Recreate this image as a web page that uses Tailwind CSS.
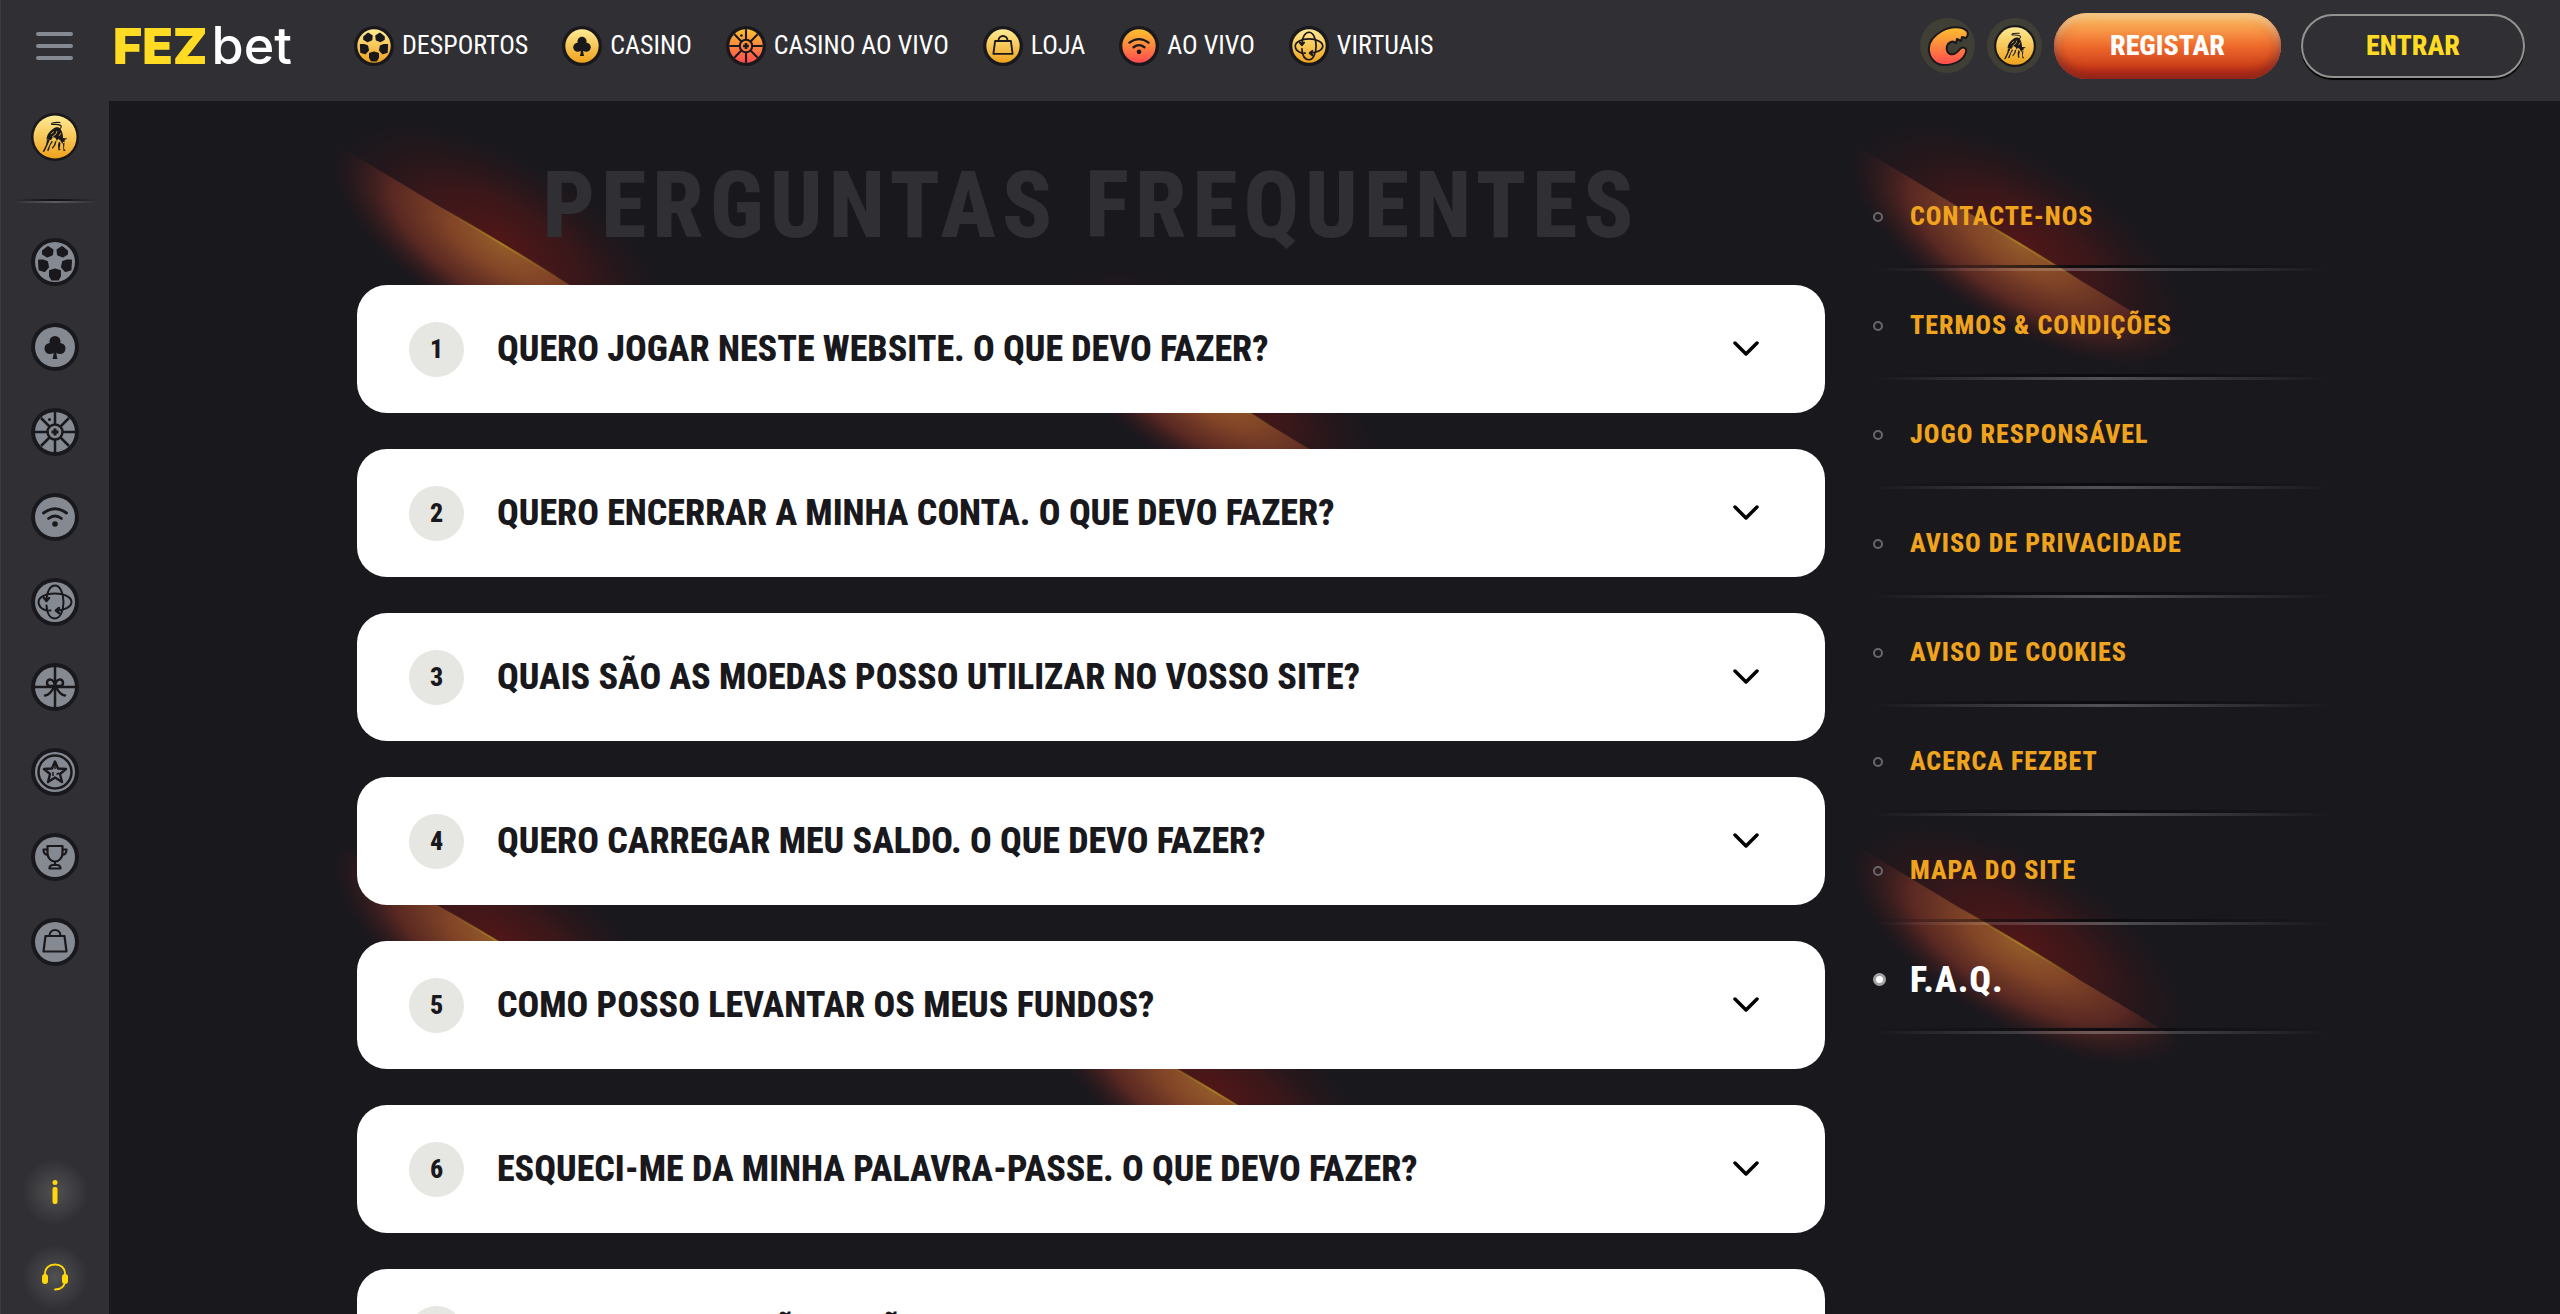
<!DOCTYPE html>
<html lang="pt">
<head>
  <meta charset="UTF-8" />
  <meta name="viewport" content="width=device-width, initial-scale=1.0" />
  <title>FEZbet - Perguntas Frequentes</title>
  <script src="https://cdn.jsdelivr.net/npm/@tailwindcss/browser@4"></script>
  <style>
    body {
      font-family: 'Roboto Condensed', 'Liberation Sans Narrow', 'Roboto', sans-serif;
    }
  </style>
</head>
<body class="bg-[#19181d] text-white">

  <!-- icon sprite -->
  <svg class="absolute w-0 h-0" aria-hidden="true">
    <defs>
      <linearGradient id="gold" x1="0" y1="0" x2="0" y2="1">
        <stop offset="0" stop-color="#ffeb94" />
        <stop offset="1" stop-color="#efa21b" />
      </linearGradient>
      <linearGradient id="fire" x1="0" y1="0" x2="0" y2="1">
        <stop offset="0" stop-color="#fdc12e" />
        <stop offset="1" stop-color="#ff4a4f" />
      </linearGradient>
      <radialGradient id="flame-top" gradientUnits="userSpaceOnUse" cx="0" cy="0" r="1" gradientTransform="scale(190 88)">
        <stop offset="0" stop-color="#521617" />
        <stop offset=".45" stop-color="#401719" stop-opacity=".85" />
        <stop offset="1" stop-color="#2c1519" stop-opacity="0" />
      </radialGradient>
      <radialGradient id="flame-bottom" gradientUnits="userSpaceOnUse" cx="0" cy="0" r="1" gradientTransform="scale(192 82)">
        <stop offset="0" stop-color="#935c2a" />
        <stop offset=".3" stop-color="#824527" />
        <stop offset=".65" stop-color="#602a23" stop-opacity=".9" />
        <stop offset="1" stop-color="#3c171b" stop-opacity="0" />
      </radialGradient>
      <linearGradient id="flame-edge">
        <stop offset="0" stop-color="#b0801f" stop-opacity="0" />
        <stop offset=".5" stop-color="#a87c22" />
        <stop offset="1" stop-color="#b0801f" stop-opacity="0" />
      </linearGradient>
    </defs>

    <symbol id="flame" viewBox="-200 -140 400 280">
      <g transform="rotate(31)">
        <path d="M-190 0A190 88 0 0 1 190 0Z" fill="url(#flame-top)" />
        <path d="M-192 0A192 82 0 0 0 192 0Z" fill="url(#flame-bottom)" />
        <rect x="-70" y="-1" width="140" height="2" fill="url(#flame-edge)" />
      </g>
    </symbol>

    <symbol id="ball" viewBox="-24 -24 48 48">
      <circle r="24" fill="#19181d" />
      <circle r="20" />
      <g fill="#19181d" stroke="#19181d" stroke-width="2" stroke-linejoin="round">
        <path d="M-12-11L-7-15L-2.500-12L-3-7.500L-8-5.500L-12-8Z" />
        <path d="M12-11L7-15L2.500-12L3-7.500L8-5.500L12-8Z" />
        <path d="M-16-1.500L-12-1.500L-8 0L-7 5L-10.500 9L-15.500 7.500Z" />
        <path d="M16-1.500L12-1.500L8 0L7 5L10.500 9L15.500 7.500Z" />
        <path d="M-5 9L0 7.500L5 9L5 14L3 17.500L-3 17.500L-5 14Z" />
      </g>
    </symbol>

    <symbol id="club" viewBox="-24 -24 48 48">
      <circle r="24" fill="#19181d" />
      <circle r="20" />
      <g fill="#19181d">
        <circle cy="-5.500" r="5.500" />
        <circle cx="-5" cy="1.500" r="5.500" />
        <circle cx="5" cy="1.500" r="5.500" />
        <path d="M-1.500 0H1.500Q1 8 2.500 12H-2.500Q-1 8-1.500 0Z" />
      </g>
    </symbol>

    <symbol id="roulette" viewBox="-24 -24 48 48">
      <circle r="24" fill="#19181d" />
      <circle r="20" />
      <g stroke="#19181d" stroke-width="2.500" fill="none">
        <path d="M0-20V-8M0 20V8M-20 0H-8M20 0H8M-14-14L-5.500-5.500M14 14L5.500 5.500M14-14L5.500-5.500M-14 14L-5.500 5.500" />
        <circle r="7.500" />
        <path d="M-3.500 0H3.500M0-3.500V3.500" stroke-width="3" />
      </g>
      <circle cx="-5.500" cy="-12.500" r="1.500" fill="#19181d" />
    </symbol>

    <symbol id="wifi" viewBox="-24 -24 48 48">
      <circle r="24" fill="#19181d" />
      <circle r="20" />
      <g fill="none" stroke="#19181d" stroke-width="2.800" stroke-linecap="round">
        <path d="M-11.500-4Q0-12.500 11.500-4" />
        <path d="M-6.500 1.500Q0-3.500 6.500 1.500" />
      </g>
      <circle cy="7" r="2.800" fill="#19181d" />
    </symbol>

    <symbol id="virtual" viewBox="-24 -24 48 48">
      <circle r="24" fill="#19181d" />
      <circle r="20" />
      <g fill="none" stroke="#19181d" stroke-width="2" stroke-linecap="round" stroke-linejoin="round">
        <path d="M-8.500 8.500C-13.500 7-16.500 4-16.500 0C-16.500-5-9-8.500 0-8.500S16.500-5 16.500 0S9 8.500 1 8.500M-4.500 8.500H-6" />
        <path d="M-8.500 3.500C-8 12-4.500 16.500 0 16.500C5 16.500 8.500 9 8.500 0S5-16.500 0-16.500C-4.500-16.500-8-11-8.500-3" />
        <path d="M-11-4L-8.500-1L-6-4M4 6L1 8.500L4 11" stroke-width="2.500" />
      </g>
    </symbol>

    <symbol id="gift" viewBox="-24 -24 48 48">
      <circle r="24" fill="#19181d" />
      <circle r="20" />
      <g fill="none" stroke="#19181d" stroke-width="2.500" stroke-linecap="round" stroke-linejoin="round">
        <path d="M-20 0H20M0-20V20" />
        <path d="M0-1C-1-9-8-9-8-4Q-8-1-5-1ZM0-1C1-9 8-9 8-4Q8-1 5-1Z" />
        <path d="M-1 0Q-5 8-10 8.500M1 0Q5 8 10 8.500" />
      </g>
    </symbol>

    <symbol id="star" viewBox="-24 -24 48 48">
      <circle r="24" fill="#19181d" />
      <circle r="20" />
      <circle r="16.500" fill="none" stroke="#19181d" stroke-width="2.500" />
      <path d="M0-10.500L3-3.500L11-3L5 2L7 10L0 5.500L-7 10L-5 2L-11-3L-3-3.500Z" fill="none" stroke="#19181d" stroke-width="2.400" stroke-linejoin="round" />
      <path d="M0-9V-3M4 1L1.500 2.500M-2 0V4" stroke="#19181d" stroke-width="1.500" />
    </symbol>

    <symbol id="cup" viewBox="-24 -24 48 48">
      <circle r="24" fill="#19181d" />
      <circle r="20" />
      <g fill="none" stroke="#19181d" stroke-width="2.200" stroke-linejoin="round">
        <path d="M-7.500-11H7.500V-4C7.500 1 4 4.500 0 4.500S-7.500 1-7.500-4Z" />
        <path d="M-7.500-7.500H-11.500Q-11.500-2-7-2M7.500-7.500H11.500Q11.500-2 7-2M0 4.500V8" />
        <path d="M-5.500 11.500Q-5.500 8-2 8H2Q5.500 8 5.500 11.500Z" />
      </g>
    </symbol>

    <symbol id="bag" viewBox="-24 -24 48 48">
      <circle r="24" fill="#19181d" />
      <circle r="20" />
      <g fill="none" stroke="#19181d" stroke-width="2.200" stroke-linejoin="round">
        <path d="M-9.500-6H9.500L11.500 9.500H-11.500Z" />
        <path d="M-5.500-6C-5.500-14 5.500-14 5.500-6" />
      </g>
    </symbol>

    <symbol id="bull" viewBox="-24 -24 48 48">
      <circle r="24" fill="#19181d" />
      <circle r="21.500" />
      <g fill="#19181d">
        <path d="M-2-8C0-10 4-10.500 5.500-8C7.500-5 8-2 8 1L12.500 1.500L9.500 3L10 4.500L8 5L7.500 7L5 3L3 2L2 4L.5 1L-2 0L-4 3L-8.500 2.500C-8-3-5-6-2-8Z" />
        <path d="M-8 3L-5 2.500L-7 7L-10.500 14.500L-12.500 15L-9 8Z" />
        <path d="M-3.500 4L-2 4.500L-4.500 8L-6.500 14L-8 13.500L-5.500 8Z" />
        <path d="M0 4.500L1.500 4L.5 8L-2.500 12L-3 10.500L-1 8Z" />
        <path d="M4 4.500L5.500 6L4.500 12L6 12.500L3.500 13.500L3 8Z" />
        <path d="M8 6.500L9.500 5.500L9 11.500L10.500 14H8.500Z" />
      </g>
      <path d="M5-8.500C8-11 6-13-3-12.500C-5-14 0-15 5-14.500" fill="none" stroke="#19181d" stroke-width="1.200" stroke-linecap="round" />
      <path d="M-4-3L-1-5.500M-3 0L1-3L2-6M4-1L6-4" fill="none" stroke="#f3bd45" stroke-width=".8" />
    </symbol>

    <symbol id="claw" viewBox="-21 -21 42 42">
      <path d="M19-15C14-20 2-20-6-15C-15-10-20-3-19 5C-18 13-12 19-4 19C7 19 16 14 18 6C19 2 15 0 12 3C9 7 5 9 2 8C-2 6-2 1 0-2C2-4 4-5 6-4L8-3L9-7L13-5L14-9L18-8C20-10 20-13 19-15Z" fill="url(#fire)" stroke="#19181d" stroke-width="2" stroke-linejoin="round" />
    </symbol>

    <symbol id="chevron" viewBox="0 0 26 16">
      <path d="M2 2L13 13L24 2" fill="none" stroke="#000" stroke-width="3.500" stroke-linecap="round" stroke-linejoin="round" />
    </symbol>
  </svg>

  <div class="h-screen overflow-hidden flex flex-col border-l border-[#3d3c42]">

    <!-- top bar -->
    <header class="h-[101px] shrink-0 bg-[#302f34] pb-[10px] pl-[35px] pr-[35px] flex items-center">
      <button type="button" aria-label="Menu" class="w-[37px] flex flex-col gap-2">
        <span class="h-1 rounded-full bg-[#858991]"></span>
        <span class="h-1 rounded-full bg-[#858991]"></span>
        <span class="h-1 rounded-full bg-[#858991]"></span>
      </button>
      <a href="#" class="ml-10 w-[200px] flex items-baseline gap-1 leading-none font-[Inter] font-medium"><span class="text-[50px] font-black text-[#ffdc23]">FEZ</span><span class="text-[52px]">bet</span></a>
      <nav class="ml-[41px] flex items-center gap-[34px] text-[26px] whitespace-nowrap">
        <a href="#" class="flex items-center gap-2"><svg class="w-10 h-10" fill="url(#gold)"><use href="#ball" /></svg>DESPORTOS</a>
        <a href="#" class="flex items-center gap-2"><svg class="w-10 h-10" fill="url(#gold)"><use href="#club" /></svg>CASINO</a>
        <a href="#" class="flex items-center gap-2"><svg class="w-10 h-10" fill="url(#fire)"><use href="#roulette" /></svg>CASINO AO VIVO</a>
        <a href="#" class="flex items-center gap-2"><svg class="w-10 h-10" fill="url(#gold)"><use href="#bag" /></svg>LOJA</a>
        <a href="#" class="flex items-center gap-2"><svg class="w-10 h-10" fill="url(#fire)"><use href="#wifi" /></svg>AO VIVO</a>
        <a href="#" class="flex items-center gap-2"><svg class="w-10 h-10" fill="url(#gold)"><use href="#virtual" /></svg>VIRTUAIS</a>
      </nav>
      <div class="ml-auto flex items-center gap-3 text-[28px] font-extrabold">
        <button type="button" aria-label="Bónus" class="w-[55px] h-[55px] rounded-full bg-[#403f35] flex items-center justify-center">
          <svg class="w-[42px] h-[42px]"><use href="#claw" /></svg>
        </button>
        <button type="button" aria-label="Touro" class="w-[55px] h-[55px] rounded-full bg-[#403f35] flex items-center justify-center">
          <svg class="w-[42px] h-[42px]" fill="url(#gold)"><use href="#bull" /></svg>
        </button>
        <button type="button" class="w-[227px] h-[66px] rounded-full bg-linear-to-b from-[#ffc766] via-[#ee6a2b] via-50% to-[#b81f12] shadow-[inset_0_-6px_8px_#8e2017,inset_0_4px_8px_#ffdf9e,inset_-6px_0_12px_#b8502f80,inset_6px_0_12px_#b8502f80]">REGISTAR</button>
        <button type="button" class="ml-2 w-[224px] h-16 rounded-full border-2 border-[#94928f] shadow-[0_2px_1px_#000] text-[#ffdc23]">ENTRAR</button>
      </div>
    </header>

    <div class="flex-1 min-h-0 flex">

      <!-- side rail -->
      <aside class="w-[108px] shrink-0 bg-[#302f34] pt-3 pb-3 flex flex-col items-center" aria-label="Atalhos">
        <a href="#" aria-label="Touro"><svg class="w-12 h-12" fill="url(#gold)"><use href="#bull" /></svg></a>
        <div class="mt-[38px] w-[84px]">
          <div class="h-[2px] bg-linear-to-r from-transparent via-[#111014] to-transparent"></div>
          <div class="h-[2px] bg-linear-to-r from-transparent via-[#5c5b60] to-transparent"></div>
        </div>
        <nav class="mt-[35px] flex flex-col gap-[37px] fill-[#858991]">
          <a href="#" aria-label="Desportos"><svg class="w-12 h-12"><use href="#ball" /></svg></a>
          <a href="#" aria-label="Casino"><svg class="w-12 h-12"><use href="#club" /></svg></a>
          <a href="#" aria-label="Casino ao vivo"><svg class="w-12 h-12"><use href="#roulette" /></svg></a>
          <a href="#" aria-label="Ao vivo"><svg class="w-12 h-12"><use href="#wifi" /></svg></a>
          <a href="#" aria-label="Virtuais"><svg class="w-12 h-12"><use href="#virtual" /></svg></a>
          <a href="#" aria-label="Promoções"><svg class="w-12 h-12"><use href="#gift" /></svg></a>
          <a href="#" aria-label="VIP"><svg class="w-12 h-12"><use href="#star" /></svg></a>
          <a href="#" aria-label="Torneios"><svg class="w-12 h-12"><use href="#cup" /></svg></a>
          <a href="#" aria-label="Loja"><svg class="w-12 h-12"><use href="#bag" /></svg></a>
        </nav>
        <div class="mt-auto flex flex-col gap-[19px] -mb-2">
          <a href="#" aria-label="Informação" class="w-[66px] h-[66px] rounded-full bg-[radial-gradient(closest-side,#515052,#302f34)] flex items-center justify-center">
            <svg class="w-6 h-6" viewBox="0 0 24 24" fill="#ffd70a"><circle cx="12" cy="2.500" r="2.500" /><rect x="9.500" y="7" width="5" height="17" rx="2" /></svg>
          </a>
          <a href="#" aria-label="Apoio ao cliente" class="w-[66px] h-[66px] rounded-full bg-[radial-gradient(closest-side,#515052,#302f34)] flex items-center justify-center">
            <svg class="w-7 h-7" viewBox="0 0 28 28" fill="none" stroke="#ffd70a" stroke-width="1.800" stroke-linecap="round">
              <path d="M4 14V11C4 5 8 1.500 14 1.500S24 5 24 11V14M24 19C23 24 19 26.500 14 26.500" />
              <path d="M4 14V18M24 14V18" stroke-width="6" />
            </svg>
          </a>
        </div>
      </aside>

      <main class="flex-1 min-w-0 overflow-hidden pl-[248px] pr-[232px] flex gap-12">

        <!-- questions -->
        <section class="relative flex-1 min-w-0">
          <svg class="absolute -left-[55px] top-[3px] w-[400px] h-[280px]"><use href="#flame" /></svg>
          <svg class="absolute left-[656px] top-[150px] w-[400px] h-[280px]"><use href="#flame" /></svg>
          <svg class="absolute -left-[55px] top-[703px] w-[400px] h-[280px]"><use href="#flame" /></svg>
          <svg class="absolute left-[656px] top-[850px] w-[400px] h-[280px]"><use href="#flame" /></svg>

          <h1 class="relative h-[184px] pt-[50px] text-center text-[92px] leading-[110px] font-extrabold tracking-[6px] text-[#302f34] whitespace-nowrap">PERGUNTAS FREQUENTES</h1>

          <div class="relative flex flex-col gap-9 text-[#19181d] text-[36px] font-extrabold">
            <button type="button" class="h-32 shrink-0 rounded-[30px] bg-white pl-[52px] pr-[66px] flex items-center text-left">
              <span class="w-[55px] h-[55px] mr-[33px] rounded-full bg-[#e6e7e2] flex items-center justify-center text-[26px]">1</span>
              QUERO JOGAR NESTE WEBSITE. O QUE DEVO FAZER?
              <svg class="ml-auto w-[26px] h-4"><use href="#chevron" /></svg>
            </button>
            <button type="button" class="h-32 shrink-0 rounded-[30px] bg-white pl-[52px] pr-[66px] flex items-center text-left">
              <span class="w-[55px] h-[55px] mr-[33px] rounded-full bg-[#e6e7e2] flex items-center justify-center text-[26px]">2</span>
              QUERO ENCERRAR A MINHA CONTA. O QUE DEVO FAZER?
              <svg class="ml-auto w-[26px] h-4"><use href="#chevron" /></svg>
            </button>
            <button type="button" class="h-32 shrink-0 rounded-[30px] bg-white pl-[52px] pr-[66px] flex items-center text-left">
              <span class="w-[55px] h-[55px] mr-[33px] rounded-full bg-[#e6e7e2] flex items-center justify-center text-[26px]">3</span>
              QUAIS SÃO AS MOEDAS POSSO UTILIZAR NO VOSSO SITE?
              <svg class="ml-auto w-[26px] h-4"><use href="#chevron" /></svg>
            </button>
            <button type="button" class="h-32 shrink-0 rounded-[30px] bg-white pl-[52px] pr-[66px] flex items-center text-left">
              <span class="w-[55px] h-[55px] mr-[33px] rounded-full bg-[#e6e7e2] flex items-center justify-center text-[26px]">4</span>
              QUERO CARREGAR MEU SALDO. O QUE DEVO FAZER?
              <svg class="ml-auto w-[26px] h-4"><use href="#chevron" /></svg>
            </button>
            <button type="button" class="h-32 shrink-0 rounded-[30px] bg-white pl-[52px] pr-[66px] flex items-center text-left">
              <span class="w-[55px] h-[55px] mr-[33px] rounded-full bg-[#e6e7e2] flex items-center justify-center text-[26px]">5</span>
              COMO POSSO LEVANTAR OS MEUS FUNDOS?
              <svg class="ml-auto w-[26px] h-4"><use href="#chevron" /></svg>
            </button>
            <button type="button" class="h-32 shrink-0 rounded-[30px] bg-white pl-[52px] pr-[66px] flex items-center text-left">
              <span class="w-[55px] h-[55px] mr-[33px] rounded-full bg-[#e6e7e2] flex items-center justify-center text-[26px]">6</span>
              ESQUECI-ME DA MINHA PALAVRA-PASSE. O QUE DEVO FAZER?
              <svg class="ml-auto w-[26px] h-4"><use href="#chevron" /></svg>
            </button>
            <button type="button" class="h-32 shrink-0 rounded-[30px] bg-white pl-[52px] pr-[66px] flex items-center text-left">
              <span class="w-[55px] h-[55px] mr-[33px] rounded-full bg-[#e6e7e2] flex items-center justify-center text-[26px]">7</span>
              OS MEUS DADOS NÃO ESTÃO CORRETOS. O QUE DEVO FAZER?
              <svg class="ml-auto w-[26px] h-4"><use href="#chevron" /></svg>
            </button>
          </div>
        </section>

        <!-- info pages -->
        <nav class="relative w-[455px] shrink-0 pt-[61px] text-[26px] font-extrabold tracking-[1px] text-[#f0a31c]">
          <svg class="absolute -left-[53px] top-[3px] w-[400px] h-[280px]"><use href="#flame" /></svg>
          <svg class="absolute -left-[53px] top-[703px] w-[400px] h-[280px]"><use href="#flame" /></svg>
          <ul class="relative">
            <li class="h-[109px] flex flex-col">
              <a href="#" class="flex-1 pt-1.5 flex items-center"><span class="w-[10px] h-[10px] mr-[27px] rounded-full border-2 border-[#68676b]"></span>CONTACTE-NOS</a>
              <span class="h-[3px] bg-linear-to-r from-transparent via-[#0c0b0e] to-transparent"></span>
              <span class="h-[3px] bg-linear-to-r from-transparent via-white/25 to-transparent"></span>
            </li>
            <li class="h-[109px] flex flex-col">
              <a href="#" class="flex-1 pt-1.5 flex items-center"><span class="w-[10px] h-[10px] mr-[27px] rounded-full border-2 border-[#68676b]"></span>TERMOS &amp; CONDIÇÕES</a>
              <span class="h-[3px] bg-linear-to-r from-transparent via-[#0c0b0e] to-transparent"></span>
              <span class="h-[3px] bg-linear-to-r from-transparent via-white/25 to-transparent"></span>
            </li>
            <li class="h-[109px] flex flex-col">
              <a href="#" class="flex-1 pt-1.5 flex items-center"><span class="w-[10px] h-[10px] mr-[27px] rounded-full border-2 border-[#68676b]"></span>JOGO RESPONSÁVEL</a>
              <span class="h-[3px] bg-linear-to-r from-transparent via-[#0c0b0e] to-transparent"></span>
              <span class="h-[3px] bg-linear-to-r from-transparent via-white/25 to-transparent"></span>
            </li>
            <li class="h-[109px] flex flex-col">
              <a href="#" class="flex-1 pt-1.5 flex items-center"><span class="w-[10px] h-[10px] mr-[27px] rounded-full border-2 border-[#68676b]"></span>AVISO DE PRIVACIDADE</a>
              <span class="h-[3px] bg-linear-to-r from-transparent via-[#0c0b0e] to-transparent"></span>
              <span class="h-[3px] bg-linear-to-r from-transparent via-white/25 to-transparent"></span>
            </li>
            <li class="h-[109px] flex flex-col">
              <a href="#" class="flex-1 pt-1.5 flex items-center"><span class="w-[10px] h-[10px] mr-[27px] rounded-full border-2 border-[#68676b]"></span>AVISO DE COOKIES</a>
              <span class="h-[3px] bg-linear-to-r from-transparent via-[#0c0b0e] to-transparent"></span>
              <span class="h-[3px] bg-linear-to-r from-transparent via-white/25 to-transparent"></span>
            </li>
            <li class="h-[109px] flex flex-col">
              <a href="#" class="flex-1 pt-1.5 flex items-center"><span class="w-[10px] h-[10px] mr-[27px] rounded-full border-2 border-[#68676b]"></span>ACERCA FEZBET</a>
              <span class="h-[3px] bg-linear-to-r from-transparent via-[#0c0b0e] to-transparent"></span>
              <span class="h-[3px] bg-linear-to-r from-transparent via-white/25 to-transparent"></span>
            </li>
            <li class="h-[109px] flex flex-col">
              <a href="#" class="flex-1 pt-1.5 flex items-center"><span class="w-[10px] h-[10px] mr-[27px] rounded-full border-2 border-[#68676b]"></span>MAPA DO SITE</a>
              <span class="h-[3px] bg-linear-to-r from-transparent via-[#0c0b0e] to-transparent"></span>
              <span class="h-[3px] bg-linear-to-r from-transparent via-white/25 to-transparent"></span>
            </li>
            <li class="h-[109px] flex flex-col">
              <a href="#" aria-current="page" class="flex-1 pt-1.5 flex items-center text-white text-[36px]"><span class="w-[13px] h-[13px] mr-6 rounded-full border-[3px] border-[#a3a2a4] bg-white"></span>F.A.Q.</a>
              <span class="h-[3px] bg-linear-to-r from-transparent via-[#0c0b0e] to-transparent"></span>
              <span class="h-[3px] bg-linear-to-r from-transparent via-white/25 to-transparent"></span>
            </li>
          </ul>
        </nav>
      </main>
    </div>
  </div>
</body>
</html>
